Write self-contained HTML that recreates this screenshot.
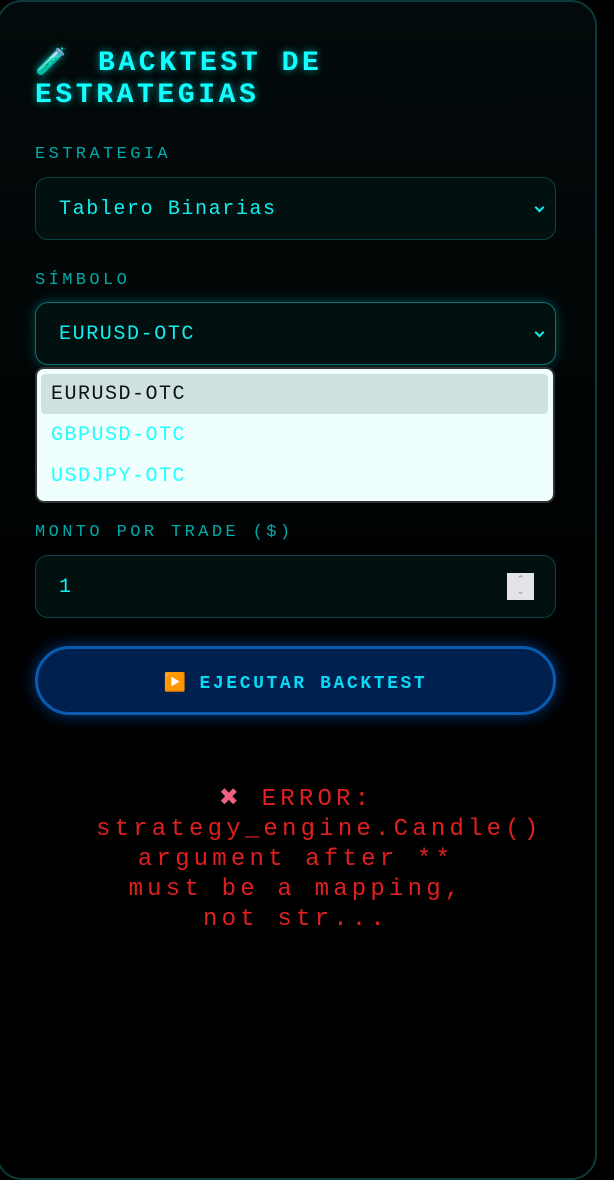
<!DOCTYPE html>
<html><head><meta charset="utf-8"><style>
*{box-sizing:border-box;margin:0;padding:0}
body{width:614px;height:1154px;background:#000;overflow:hidden;font-family:"Liberation Mono",monospace;position:relative}
.card{position:absolute;left:-4px;top:0;width:601px;height:1180px;border:2px solid #0c3a3a;border-radius:26px;background:linear-gradient(#020a0b,#000 60%)}
.abs{position:absolute}
h1{position:absolute;left:35px;top:47px;font-size:28px;line-height:32px;font-weight:bold;color:#1ff;letter-spacing:3.6px;text-shadow:0 0 8px rgba(0,255,255,.6);white-space:nowrap}
.em{display:inline-block;width:63px;font-size:26px;letter-spacing:0}
.lbl{position:absolute;left:35px;font-size:17px;letter-spacing:3.4px;color:#0aa;}
.sel{position:absolute;left:35px;width:521px;height:63px;border:1.5px solid #0b4444;border-radius:13px;background:#02100f;color:#1ee;font-size:20px;letter-spacing:1.6px;line-height:63px;padding-left:23px}
.chev{position:absolute;right:12px;top:26px;width:7px;height:7px;border-right:2px solid #1ee;border-bottom:2px solid #1ee;transform:rotate(45deg)}
.dd{position:absolute;left:35px;top:367px;width:520px;height:136px;background:#effffd;border:2px solid #333;border-radius:9px}
.opt{position:absolute;left:14px;font-size:20px;letter-spacing:1.5px;color:#2ff}
.btn{position:absolute;left:35px;top:646px;width:521px;height:69px;border:3px solid #0a5ab0;border-radius:35px;background:#002050;box-shadow:0 0 16px rgba(0,120,255,.5);color:#08d8f5;font-weight:bold;font-size:18px;letter-spacing:2.6px;text-align:center;line-height:71px}
.err{position:absolute;left:96px;top:785px;width:400px;text-align:center;color:#e02020;font-size:24px;letter-spacing:4.2px;line-height:30px}
</style></head><body>
<div class="card"></div>
<h1><span class="em">🧪</span>BACKTEST DE<br>ESTRATEGIAS</h1>
<div class="lbl" style="top:145px">ESTRATEGIA</div>
<div class="sel" style="top:177px">Tablero Binarias<span class="chev"></span></div>
<div class="lbl" style="top:271px">SÍMBOLO</div>
<div class="sel" style="top:302px;border-color:#0e7070;box-shadow:0 0 12px rgba(0,200,200,.35)">EURUSD-OTC<span class="chev"></span></div>
<div class="dd">
<div class="abs" style="left:4px;top:5px;width:507px;height:40px;background:#cfe2e0;border-radius:4px"></div>
<div class="opt" style="top:14px;color:#111">EURUSD-OTC</div>
<div class="opt" style="top:55px">GBPUSD-OTC</div>
<div class="opt" style="top:96px">USDJPY-OTC</div>
</div>
<div class="lbl" style="top:523px">MONTO POR TRADE ($)</div>
<div class="sel" style="top:555px">1
<div class="abs" style="right:21px;top:17px;width:27px;height:27px;background:#e4e4e8;color:#888;font-size:9px;line-height:12px;text-align:center;letter-spacing:0;padding-top:1px">⌃<br>⌄</div></div>
<div class="btn"><span style="letter-spacing:0;font-size:18px">▶️</span> EJECUTAR BACKTEST</div>
<div class="err"><span style="color:#f06080">✖</span> ERROR: strategy_engine.Candle() argument after ** must be a mapping, not str...</div>
</body></html>
